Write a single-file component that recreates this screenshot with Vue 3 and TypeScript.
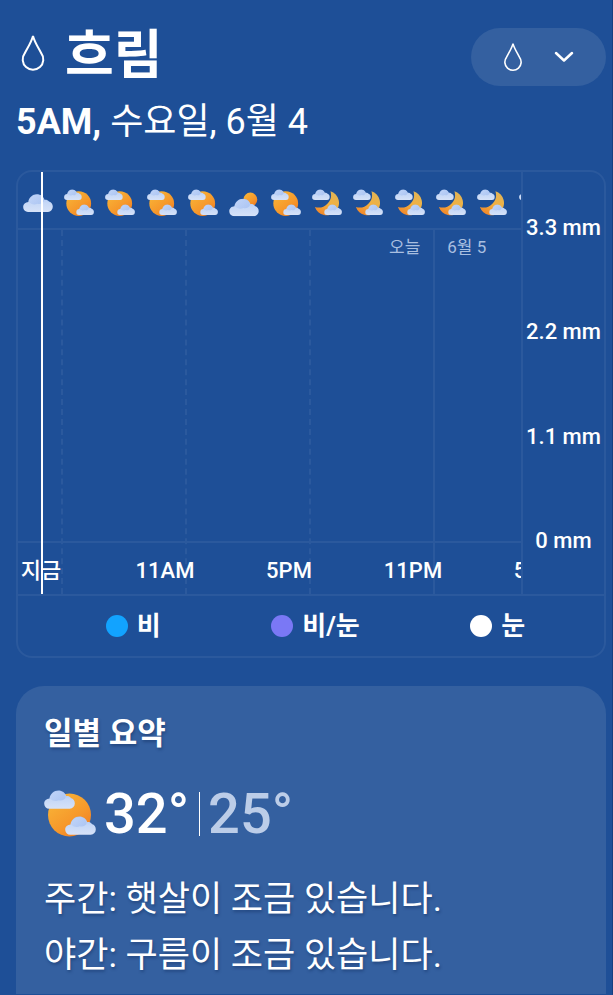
<script setup lang="ts">
interface Series {
  label: string
  kind: 'rain' | 'mix' | 'snow'
}

const hourlyIcons: string[] = [
  'cloud', 'partly', 'partly', 'partly', 'partly', 'mostly', 'partly',
  'night', 'night', 'night', 'night', 'night', 'night',
]
const hourLabels: string[] = ['지금', '11AM', '5PM', '11PM', '5AM']
const axisLabels: string[] = ['3.3 mm', '2.2 mm', '1.1 mm', '0 mm']
const series: Series[] = [
  { label: '비', kind: 'rain' },
  { label: '비/눈', kind: 'mix' },
  { label: '눈', kind: 'snow' },
]
</script>

<template>
  <main class="page">
    <svg class="sprite" aria-hidden="true">
      <defs>
        <linearGradient id="g-cloud" x1="0" y1="0" x2="0" y2="1">
          <stop offset="0" stop-color="#a9c4f3" />
          <stop offset="0.5" stop-color="#c6d8f7" />
          <stop offset="1" stop-color="#d6e2f8" />
        </linearGradient>
        <linearGradient id="g-puff" x1="0.2" y1="0" x2="0.9" y2="1">
          <stop offset="0" stop-color="#c9dafa" />
          <stop offset="1" stop-color="#9dbaf0" />
        </linearGradient>
        <linearGradient id="g-sun" x1="0.1" y1="0.1" x2="0.8" y2="1">
          <stop offset="0" stop-color="#f8b437" />
          <stop offset="0.6" stop-color="#f6982b" />
          <stop offset="1" stop-color="#f07c22" />
        </linearGradient>
        <linearGradient id="g-moon" x1="0.8" y1="0" x2="0.2" y2="1">
          <stop offset="0" stop-color="#dfb458" />
          <stop offset="0.5" stop-color="#f2b040" />
          <stop offset="1" stop-color="#f28327" />
        </linearGradient>
        <symbol id="shape-cloud" viewBox="0 0 30 18">
          <path d="M5 18A4.800 4.800 0 0 1 .2 13C.2 10 2.500 8.200 5.300 8 6 3.500 9.500 .3 13.800 .3 17.800 .3 20.500 2.500 21.500 5.800 23 5.500 25 6 26 7.600 28.500 8.300 29.800 10.300 29.800 12.700A5.200 5.200 0 0 1 25 18Z" fill="url(#g-cloud)" />
          <path d="M6 8C7 3.500 10 .8 13.800 .8 17.500 .8 20 3 21 6.500 20.500 9 17.500 10.500 14.500 9.800 11.500 11 8 10.500 6 8Z" fill="url(#g-puff)" opacity="0.65" />
        </symbol>
        <symbol id="icon-cloud" viewBox="0 0 52 48">
          <use href="#shape-cloud" x="0" y="8" width="52" height="32" />
        </symbol>
        <symbol id="icon-partly" viewBox="0 0 52 48">
          <circle cx="25.500" cy="25" r="21.500" fill="url(#g-sun)" />
          <use href="#shape-cloud" x="0" y="0" width="31" height="19" />
          <use href="#shape-cloud" x="21" y="26" width="31" height="19" />
        </symbol>
        <symbol id="icon-mostly" viewBox="0 0 52 48">
          <circle cx="37" cy="18" r="12" fill="url(#g-sun)" />
          <use href="#shape-cloud" x="0" y="16" width="52" height="31" />
        </symbol>
        <symbol id="icon-night" viewBox="0 0 52 48">
          <path d="M32 3.500A21.500 21.500 0 1 1 5 31 22 22 0 0 0 32 3.500Z" fill="url(#g-moon)" />
          <use href="#shape-cloud" x="0" y="0" width="31" height="19" />
          <use href="#shape-cloud" x="21" y="26" width="31" height="19" />
        </symbol>
        <symbol id="icon-drop" viewBox="0 0 24 38">
          <path d="M12 2C10.500 8 6.500 14 3.800 19.200A10.300 10.300 0 1 0 20.200 19.200C17.500 14 13.500 8 12 2Z" fill="none" stroke="#fff" stroke-width="2" />
        </symbol>
      </defs>
    </svg>

    <header class="header">
      <div class="heading">
        <svg class="drop" aria-hidden="true"><use href="#icon-drop" /></svg>
        <h1 class="title">흐림</h1>
      </div>
      <button class="picker" type="button" aria-label="강수량">
        <svg class="drop-small" aria-hidden="true"><use href="#icon-drop" /></svg>
        <svg class="chevron" viewBox="0 0 20 12" aria-hidden="true">
          <path d="M2 2 10 9.500 18 2" fill="none" stroke="#fff" stroke-width="2.500" stroke-linecap="round" stroke-linejoin="round" />
        </svg>
      </button>
    </header>
    <p class="date"><b>5AM,</b> 수요일, 6월 4</p>

    <section class="chart">
      <div class="timeline">
        <div class="icons">
          <svg v-for="(icon, i) in hourlyIcons" :key="i" class="hour-icon" aria-hidden="true">
            <use :href="'#icon-' + icon" />
          </svg>
        </div>
        <div class="plot">
          <div class="gridlines">
            <span></span><span></span><span></span><span class="midnight"></span>
          </div>
          <div class="days">
            <span class="today">오늘</span>
            <span class="tomorrow">6월 5</span>
          </div>
          <div class="hours">
            <span v-for="(hour, i) in hourLabels" :key="i">{{ hour }}</span>
          </div>
        </div>
        <div class="now"></div>
      </div>
      <div class="axis">
        <span v-for="label in axisLabels" :key="label">{{ label }}</span>
      </div>
      <ul class="legend">
        <li v-for="item in series" :key="item.kind">
          <i class="dot" :class="item.kind"></i>{{ item.label }}
        </li>
      </ul>
    </section>

    <section class="summary">
      <h2>일별 요약</h2>
      <div class="temps">
        <svg class="day-icon" aria-hidden="true"><use href="#icon-partly" /></svg>
        <span class="high">32°</span>
        <span class="low">25°</span>
      </div>
      <p>주간: 햇살이 조금 있습니다.</p>
      <p>야간: 구름이 조금 있습니다.</p>
    </section>
  </main>
</template>

<style>
body {
  background: #1e4f97;
}
</style>

<style scoped>
.page {
  --line: #2b599d;
  box-sizing: border-box;
  min-height: 100vh;
  display: flex;
  flex-direction: column;
  padding: 28px 6px 0 16px;
  border-right: 1px solid #163f7f;
  border-bottom: 1px solid #1e4f97;
  background: #1e4f97;
  color: #fff;
  font-family: Roboto, "Noto Sans CJK KR", sans-serif;
}
.sprite {
  position: absolute;
  width: 0;
  height: 0;
}
.header {
  display: flex;
  justify-content: space-between;
  align-items: flex-start;
  height: 58px;
}
.heading {
  display: flex;
  align-items: center;
  gap: 20px;
  padding-left: 5px;
}
.drop {
  width: 24px;
  height: 38px;
  margin-bottom: 6px;
}
.title {
  margin: 0;
  font-size: 53px;
  line-height: 56px;
  font-weight: 700;
}
.picker {
  display: flex;
  align-items: center;
  justify-content: space-between;
  width: 135px;
  height: 58px;
  padding: 0 32px;
  border: 0;
  border-radius: 29px;
  background: #3460a0;
}
.drop-small {
  width: 20px;
  height: 30px;
}
.chevron {
  width: 20px;
  height: 12px;
}
.date {
  margin: 14px 0 0;
  font-size: 36px;
  line-height: 44px;
}
.date b {
  font-weight: 700;
}
.chart {
  display: grid;
  grid-template-columns: minmax(0, 1fr) 81px;
  margin-top: 26px;
  border: 2px solid var(--line);
  border-radius: 16px;
}
.timeline {
  position: relative;
  overflow: hidden;
  border-right: 2px solid var(--line);
}
.icons {
  display: grid;
  grid-template-columns: repeat(15, 1fr);
  box-sizing: border-box;
  width: 620px;
  height: 58px;
  margin-left: -1px;
  padding-top: 17px;
  border-bottom: 2px solid var(--line);
  justify-items: center;
}
.hour-icon {
  width: 30px;
  height: 28px;
}
.plot {
  display: grid;
  grid-template-rows: 313px 51px;
}
.gridlines {
  grid-area: 1 / 1 / 3 / 2;
  display: grid;
  grid-template-columns: 45px repeat(3, 124px);
}
.gridlines span {
  border-right: 2px dashed var(--line);
}
.gridlines .midnight {
  border-right: 2px solid var(--line);
}
.days {
  grid-area: 1 / 1;
  display: flex;
  gap: 27px;
  padding: 5px 0 0 371px;
  border-bottom: 2px solid var(--line);
  color: #a9bfe0;
  font-size: 17px;
  line-height: 24px;
  white-space: nowrap;
}
.hours {
  grid-area: 2 / 1;
  display: grid;
  grid-template-columns: repeat(5, 124px);
  margin-left: -39px;
  padding-top: 5px;
  text-align: center;
  font-size: 22px;
  line-height: 46px;
  font-weight: 500;
}
.now {
  position: absolute;
  top: 0;
  bottom: 0;
  left: 23px;
  width: 2px;
  background: #fff;
}
.axis {
  display: flex;
  flex-direction: column;
  justify-content: space-between;
  align-items: center;
  padding: 44px 0 41px;
  font-size: 22px;
  line-height: 24px;
  font-weight: 500;
  white-space: nowrap;
}
.legend {
  grid-column: 1 / 3;
  display: grid;
  grid-template-columns: repeat(3, 1fr);
  margin: 0;
  padding: 0 15px 0 24px;
  border-top: 2px solid var(--line);
  list-style: none;
  font-size: 26px;
  line-height: 60px;
  font-weight: 700;
}
.legend li {
  display: flex;
  align-items: center;
  justify-content: center;
  gap: 9px;
}
.dot {
  width: 22px;
  height: 22px;
  border-radius: 50%;
}
.rain {
  background: #12a3ff;
}
.mix {
  background: #7a78f5;
}
.snow {
  background: #fff;
}
.summary {
  flex: 1;
  margin-top: 28px;
  padding: 26px 28px 8px;
  border-radius: 28px 28px 0 0;
  background: #3460a0;
}
.summary h2,
.summary p {
  margin: 0;
  text-shadow: 1px 2px 3px rgba(10, 35, 80, 0.4);
}
.summary h2 {
  font-size: 31px;
  line-height: 44px;
  font-weight: 700;
}
.summary p {
  font-size: 35px;
  line-height: 56px;
}
.temps {
  display: flex;
  align-items: center;
  height: 64px;
  margin: 26px 0;
  font-size: 56px;
  line-height: 64px;
  font-weight: 500;
}
.day-icon {
  width: 52px;
  height: 48px;
  margin-right: 8px;
}
.high {
  margin-right: 10px;
}
.low {
  padding-left: 8px;
  border-left: 1px solid #fff;
  line-height: 44px;
  color: #bccde8;
}
</style>
